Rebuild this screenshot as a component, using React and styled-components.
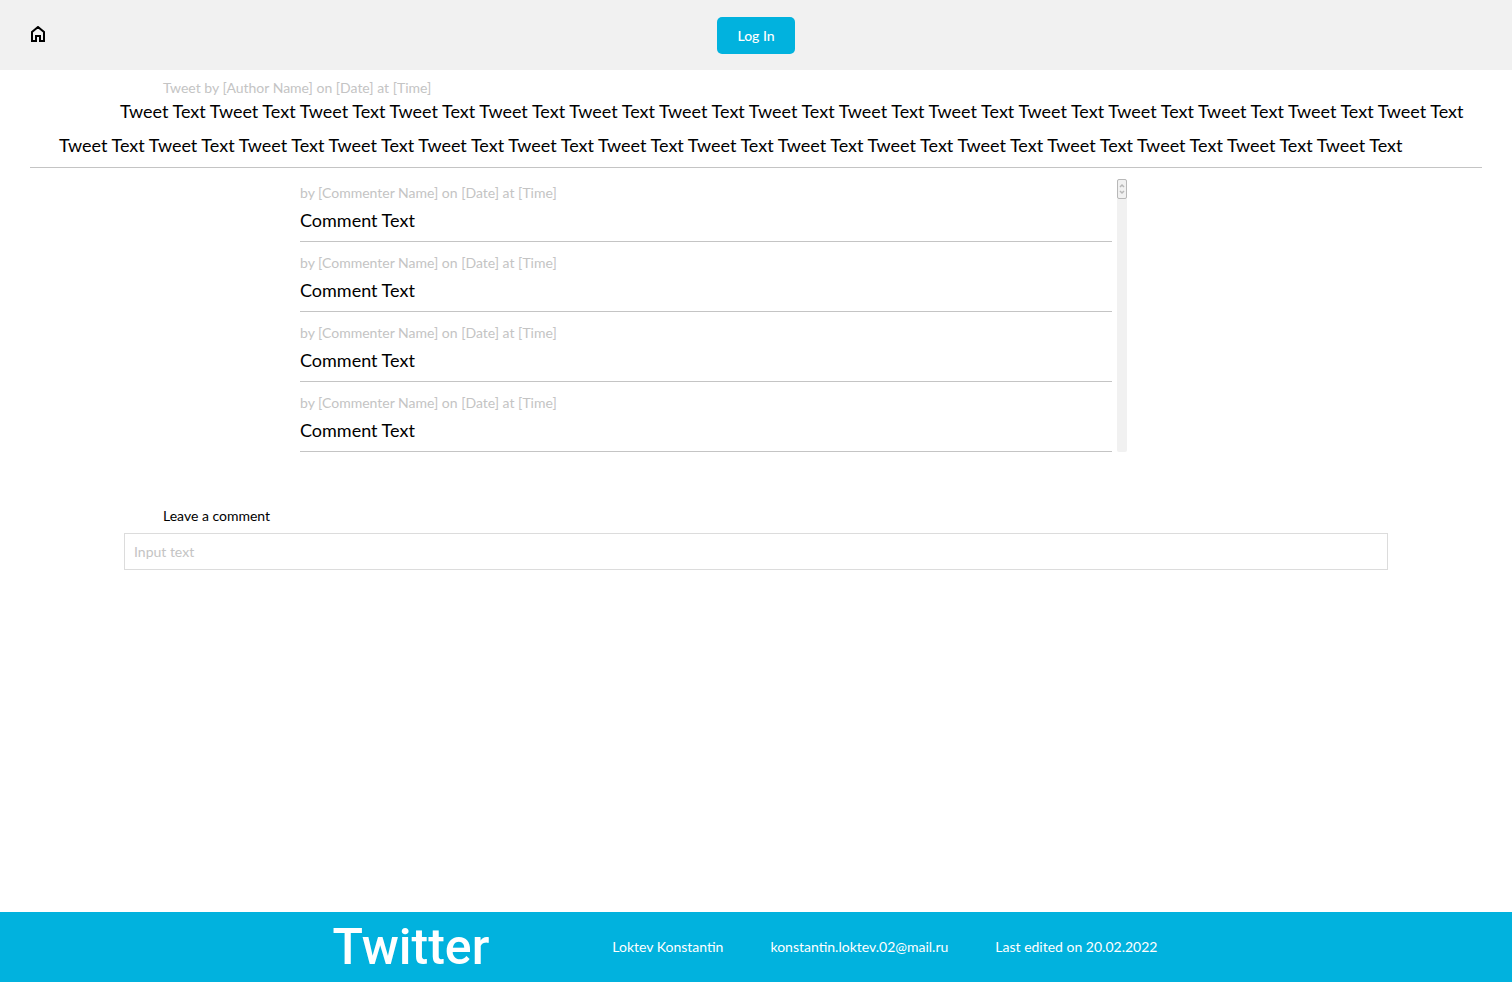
import React from "react";
import styled, { createGlobalStyle } from "styled-components";

const colors = {
  accent: "#01b2de",
  panel: "#f1f1f1",
  muted: "#c4c4c4",
  field: "#dcdcdc",
};

const GlobalStyle = createGlobalStyle`
  *, *::before, *::after { box-sizing: border-box; }
  body {
    margin: 0;
    background: #fff;
    color: #000;
    font-family: Lato, sans-serif;
    font-size: 14px;
    line-height: 20px;
  }
`;

const Page = styled.div`
  display: flex;
  flex-direction: column;
  min-height: 100vh;
`;

const Header = styled.header`
  display: grid;
  grid-template-columns: 1fr auto 1fr;
  align-items: center;
  height: 70px;
  padding: 0 30px;
  background: ${colors.panel};
`;

const HomeLink = styled.a`
  display: flex;
  justify-self: start;
  color: #000;
`;

const LoginButton = styled.button`
  height: 37px;
  padding: 2px 20px 0;
  border: 0;
  border-radius: 5px;
  background: ${colors.accent};
  color: #fff;
  font: inherit;
  font-weight: 500;
  cursor: pointer;
`;

const Main = styled.main`
  flex: 1;
`;

const Tweet = styled.article`
  margin: 0 30px;
  padding-top: 8px;
  padding-bottom: 5px;
  border-bottom: 1px solid ${colors.muted};
`;

const Meta = styled.p`
  margin: 0;
  padding-left: ${(p) => p.$indent || 0}px;
  color: ${colors.muted};
`;

const TweetText = styled.p`
  margin: -4px 0 0;
  padding-left: 29px;
  text-indent: 61px;
  font-size: 18px;
  line-height: 34px;
`;

const CommentArea = styled.section`
  display: flex;
  gap: 5px;
  margin: 11px 385px 0 300px;
`;

const CommentList = styled.ul`
  flex: 1;
  margin: 0;
  padding: 4px 0 0;
  list-style: none;
`;

const Comment = styled.li`
  padding: 0 0 8px;
  border-bottom: 1px solid ${colors.muted};

  & + & {
    padding-top: 11px;
  }
`;

const CommentText = styled.p`
  margin: 4px 0 0;
  font-size: 18px;
  line-height: 26px;
`;

const ScrollTrack = styled.div`
  width: 10px;
  border-radius: 2px;
  background: ${colors.panel};
`;

const ScrollThumb = styled.svg`
  display: block;
`;

const CommentForm = styled.form`
  margin: 54px 124px 0;
`;

const FormLabel = styled.label`
  display: block;
  padding-left: 39px;
`;

const TextField = styled.input`
  display: block;
  width: 100%;
  height: 37px;
  margin-top: 7px;
  padding: 0 9px;
  border: 1px solid ${colors.field};
  border-radius: 0;
  background: #fff;
  font: inherit;

  &::placeholder {
    color: ${colors.muted};
    opacity: 1;
  }
`;

const Footer = styled.footer`
  display: flex;
  align-items: center;
  justify-content: center;
  gap: 123px;
  height: 70px;
  padding-right: 22px;
  background: ${colors.accent};
  color: #fff;
`;

const Brand = styled.span`
  font-family: Roboto, sans-serif;
  font-size: 50px;
  font-weight: 500;
  line-height: 60px;
`;

const FooterInfo = styled.div`
  display: flex;
  gap: 47px;
`;

const FooterLink = styled.a`
  color: inherit;
  text-decoration: none;
`;

const tweetText = Array(30).fill("Tweet Text").join(" ");
const comments = [1, 2, 3, 4];

function HomeIcon() {
  return (
    <svg width="16" height="18" viewBox="0 0 16 18" fill="none" stroke="currentColor" strokeWidth="2" aria-hidden="true">
      <path d="M2 15V6L8 1L14 6V15H10V10H6V15Z" />
    </svg>
  );
}

export default function App() {
  return (
    <>
      <GlobalStyle />
      <Page>
        <Header>
          <HomeLink href="#" aria-label="Home">
            <HomeIcon />
          </HomeLink>
          <LoginButton type="button">Log In</LoginButton>
        </Header>
        <Main>
          <Tweet>
            <Meta $indent={133}>Tweet by [Author Name] on [Date] at [Time]</Meta>
            <TweetText>{tweetText}</TweetText>
          </Tweet>
          <CommentArea>
            <CommentList>
              {comments.map((id) => (
                <Comment key={id}>
                  <Meta>by [Commenter Name] on [Date] at [Time]</Meta>
                  <CommentText>Comment Text</CommentText>
                </Comment>
              ))}
            </CommentList>
            <ScrollTrack aria-hidden="true">
              <ScrollThumb width="10" height="20" viewBox="0 0 10 20" fill="none">
                <rect x="0.5" y="0.5" width="9" height="19" rx="1.5" fill="#f1f1f1" stroke="#b8b8b8" />
                <path d="M3 8L5 6L7 8M3 12L5 14L7 12" stroke="#b8b8b8" strokeWidth="1.5" />
              </ScrollThumb>
            </ScrollTrack>
          </CommentArea>
          <CommentForm>
            <FormLabel htmlFor="comment">Leave a comment</FormLabel>
            <TextField id="comment" type="text" placeholder="Input text" />
          </CommentForm>
        </Main>
        <Footer>
          <Brand>Twitter</Brand>
          <FooterInfo>
            <span>Loktev Konstantin</span>
            <FooterLink href="mailto:konstantin.loktev.02@mail.ru">konstantin.loktev.02@mail.ru</FooterLink>
            <span>Last edited on 20.02.2022</span>
          </FooterInfo>
        </Footer>
      </Page>
    </>
  );
}
